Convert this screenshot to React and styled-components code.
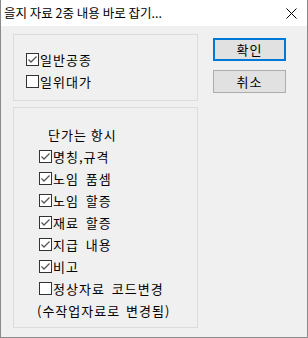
import React from "react";
import styled, { createGlobalStyle } from "styled-components";

const GlobalStyle = createGlobalStyle`
html, body {
  margin: 0;
  padding: 0;
  background: #6d6d6d;
}
* {
  box-sizing: border-box;
}
`;

const Window = styled.div`
  width: 308px;
  height: 338px;
  display: flex;
  flex-direction: column;
  background: #f0f0f0;
  border: 1px solid #8a8a8a;
  border-top: none;
  font-family: "Noto Sans CJK KR", "Noto Sans", sans-serif;
  color: #000;
  overflow: hidden;
`;

const TitleBar = styled.div`
  height: 26px;
  flex: none;
  background: #ffffff;
  display: flex;
  align-items: center;
  justify-content: space-between;
  padding: 0 10px 0 3px;
`;

const Title = styled.span`
  font-size: 12.5px;
  line-height: 1;
`;

const Body = styled.div`
  flex: 1;
  display: flex;
  padding: 8px 0 0 12px;
  gap: 15px;
`;

const LeftCol = styled.div`
  display: flex;
  flex-direction: column;
  gap: 6px;
`;

const Group = styled.div`
  width: 185px;
  height: ${(p) => p.h}px;
  border: 1px solid #dcdcdc;
  padding: ${(p) => p.pad};
  display: flex;
  flex-direction: column;
`;

const Row = styled.label`
  height: 22px;
  display: flex;
  align-items: center;
  gap: 1px;
  font-size: 13px;
  letter-spacing: 1px;
  word-spacing: 3px;
  white-space: nowrap;
`;

const Caption = styled.div`
  height: 22px;
  display: flex;
  align-items: center;
  font-size: 13px;
  letter-spacing: 1px;
  word-spacing: ${(p) => p.ws || 0}px;
  margin-left: ${(p) => p.indent || 0}px;
  white-space: nowrap;
`;

const Box = styled.span`
  width: 13px;
  height: 13px;
  flex: none;
  background: #fff;
  border: 1px solid #333;
  display: flex;
  align-items: center;
  justify-content: center;
`;

const RightCol = styled.div`
  display: flex;
  flex-direction: column;
  gap: 9px;
  padding-top: 4px;
`;

const Button = styled.button`
  width: 73px;
  height: 23px;
  background: #e1e1e1;
  border: ${(p) => (p.primary ? "2px solid #0078d7" : "1px solid #adadad")};
  font-family: inherit;
  font-size: 13px;
  letter-spacing: 1px;
  color: #000;
  padding: 0;
  display: flex;
  align-items: center;
  justify-content: center;
`;

function Check({ checked, children }) {
  return (
    <Row>
      <Box>
        {checked && (
          <svg width="11" height="11" viewBox="0 0 11 11">
            <path d="M1.5 5.5 L4 8 L9.5 2.5" fill="none" stroke="#555" strokeWidth="1.3" />
          </svg>
        )}
      </Box>
      {children}
    </Row>
  );
}

function CloseIcon() {
  return (
    <svg width="11" height="11" viewBox="0 0 11 11">
      <path d="M0.5 0.5 L10.5 10.5 M10.5 0.5 L0.5 10.5" stroke="#000" strokeWidth="1" />
    </svg>
  );
}

export default function App() {
  return (
    <React.Fragment>
      <GlobalStyle />
      <Window>
        <TitleBar>
          <Title>을지 자료 2중 내용 바로 잡기...</Title>
          <CloseIcon />
        </TitleBar>
        <Body>
          <LeftCol>
            <Group h={67} pad="13px 0 0 12px">
              <Check checked>일반공종</Check>
              <Check>일위대가</Check>
            </Group>
            <Group h={221} pad="15px 0 0 25px">
              <Caption indent={9}>단가는 항시</Caption>
              <Check checked>명칭,규격</Check>
              <Check checked>노임 품셈</Check>
              <Check checked>노임 할증</Check>
              <Check checked>재료 할증</Check>
              <Check checked>지급 내용</Check>
              <Check checked>비고</Check>
              <Check>정상자료 코드변경</Check>
              <Caption indent={-2} ws={2}>(수작업자료로 변경됨)</Caption>
            </Group>
          </LeftCol>
          <RightCol>
            <Button primary>확인</Button>
            <Button>취소</Button>
          </RightCol>
        </Body>
      </Window>
    </React.Fragment>
  );
}
